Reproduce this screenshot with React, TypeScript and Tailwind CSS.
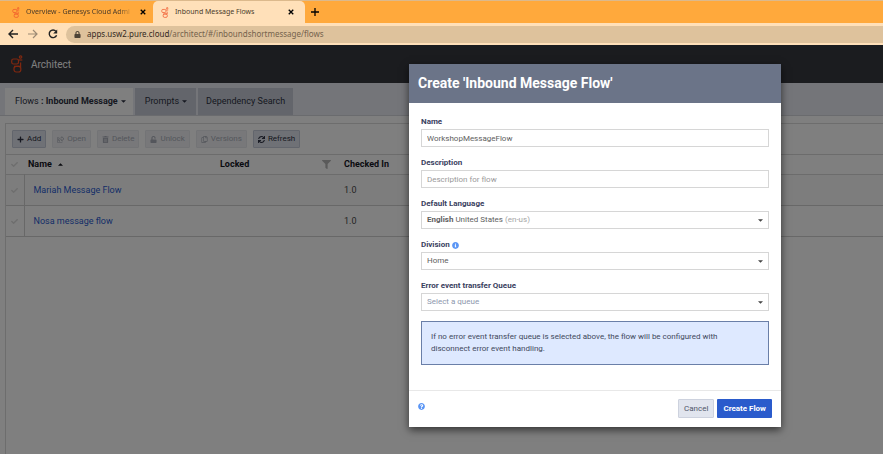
import React from "react";
import {
  FaCheck,
  FaFilter,
  FaInfoCircle,
  FaLock,
  FaPlus,
  FaQuestionCircle,
  FaRegCopy,
  FaRegShareSquare,
  FaSync,
  FaTrashAlt,
  FaUnlock,
} from "react-icons/fa";

function GenesysLogo({ className }: { className: string }) {
  return (
    <svg viewBox="0 0 12 18" fill="none" stroke="currentColor" strokeWidth="1.2" className={className} aria-hidden="true">
      <circle cx="9.6" cy="2" r="1.2" />
      <rect x="0.7" y="4" width="6.8" height="5" rx="1.8" />
      <path d="M7.5 5h3.8" />
      <path d="M3 11.4h6.6V7.6" />
      <rect x="3" y="11.4" width="6.8" height="5.6" rx="2.2" />
    </svg>
  );
}

function Caret({ up = false, className = "" }: { up?: boolean; className?: string }) {
  return (
    <svg viewBox="0 0 6 3" fill="currentColor" className={`h-[3px] w-[5px] shrink-0 ${className}`} aria-hidden="true">
      <path d={up ? "M0 3h6L3 0z" : "M0 0h6L3 3z"} />
    </svg>
  );
}

function Cross() {
  return (
    <svg viewBox="0 0 8 8" className="size-[6px]" stroke="currentColor" strokeWidth="1.8" aria-hidden="true">
      <path d="M1 1l6 6M7 1L1 7" />
    </svg>
  );
}

function BrowserChrome() {
  return (
    <div className="bg-[#ffa93c] font-['Noto_Sans',sans-serif] text-[#4a3b2a]">
      <div className="flex h-[23px] items-stretch border-t border-[#dcb98c]">
        <div className="flex w-[153px] items-center pr-[7px] pl-[12px]">
          <GenesysLogo className="h-[11px] w-[8px] shrink-0 text-[#f0562c]" />
          <span className="ml-[6px] flex-1 text-[7px] whitespace-nowrap [mask-image:linear-gradient(to_right,black_85%,transparent)]">
            Overview - Genesys Cloud Admi
          </span>
          <button aria-label="Close tab" className="ml-[6px] text-black">
            <Cross />
          </button>
        </div>
        <div className="flex w-[152px] items-center rounded-t-[5px] bg-[#ffe0b9] pr-[11px] pl-[8px]">
          <GenesysLogo className="h-[11px] w-[8px] shrink-0 text-[#f0562c]" />
          <span className="ml-[6px] flex-1 text-[7px] whitespace-nowrap">Inbound Message Flows</span>
          <button aria-label="Close tab" className="text-black">
            <Cross />
          </button>
        </div>
        <button aria-label="New tab" className="ml-[2px] px-1 text-black">
          <svg viewBox="0 0 8 8" className="size-[8px]" stroke="currentColor" strokeWidth="1.3" aria-hidden="true">
            <path d="M4 0v8M0 4h8" />
          </svg>
        </button>
      </div>
      <div className="flex h-[22px] items-center bg-[#ffe0b9] pl-[8px]">
        <button aria-label="Back" className="text-[#222]">
          <svg viewBox="0 0 10 10" fill="none" stroke="currentColor" strokeWidth="1.4" className="size-[10px]" aria-hidden="true">
            <path d="M10 5H1.2M5 1L1 5l4 4" />
          </svg>
        </button>
        <button aria-label="Forward" className="ml-[10px] text-[#9c8a74]">
          <svg viewBox="0 0 10 10" fill="none" stroke="currentColor" strokeWidth="1.2" className="size-[10px]" aria-hidden="true">
            <path d="M0 5h8.8M5 1l4 4-4 4" />
          </svg>
        </button>
        <button aria-label="Reload" className="ml-[10px] text-[#222]">
          <svg viewBox="0 0 10 10" fill="none" stroke="currentColor" strokeWidth="1.4" className="size-[10px]" aria-hidden="true">
            <path d="M8.6 6.2A3.8 3.8 0 1 1 8 2.4" />
            <path d="M9.2 0.4v4H5.2z" fill="currentColor" stroke="none" />
          </svg>
        </button>
        <div className="ml-[8px] flex h-[17px] flex-1 items-center rounded-l-full bg-[#dec29c] pl-[8px]">
          <FaLock className="size-[7px] text-[#4d4336]" />
          <span className="ml-[6px] text-[8px] text-[#75634c]">
            <span className="text-[#33291d]">apps.usw2.pure.cloud</span>/architect/#/inboundshortmessage/flows
          </span>
        </div>
      </div>
    </div>
  );
}

const tools = [
  { label: "Add", Icon: FaPlus, enabled: true },
  { label: "Open", Icon: FaRegShareSquare, enabled: false },
  { label: "Delete", Icon: FaTrashAlt, enabled: false },
  { label: "Unlock", Icon: FaUnlock, enabled: false },
  { label: "Versions", Icon: FaRegCopy, enabled: false },
  { label: "Refresh", Icon: FaSync, enabled: true },
];

const flows = [
  { name: "Mariah Message Flow", version: "1.0" },
  { name: "Nosa message flow", version: "1.0" },
];

function FlowsPage() {
  return (
    <div className="flex flex-1 flex-col bg-white text-[#2d3142]">
      <header className="flex h-[38px] items-center bg-[#36383f] pl-[11px]">
        <GenesysLogo className="h-[18px] w-[12px] text-[#ff4f1f]" />
        <h1 className="ml-[8px] text-[10px] text-white">Architect</h1>
      </header>
      <nav className="flex h-[33px] items-end gap-[2px] border-b border-[#d4d6dc] bg-[#e9ebf2] pl-[5px] text-[9px]">
        <button className="flex h-[27px] items-center bg-white pr-[7px] pl-[10px]">
          <span>
            Flows <b>: Inbound Message</b>
          </span>
          <Caret className="ml-[3px]" />
        </button>
        <button className="flex h-[27px] items-center bg-[#c6cbd6] pr-[9px] pl-[10px]">
          Prompts
          <Caret className="ml-[3px]" />
        </button>
        <button className="h-[27px] bg-[#c6cbd6] px-[8px]">Dependency Search</button>
      </nav>
      <main className="mt-[7px] ml-[5px] flex-1 border-t border-l border-[#dadada]">
        <div className="flex h-[30px] items-center gap-[6px] pl-[6px]">
          {tools.map(({ label, Icon, enabled }) => (
            <button
              key={label}
              disabled={!enabled}
              className="flex h-[18px] items-center gap-[3px] rounded-[1px] border border-[#c4cad8] bg-[#dfe3ec] px-[4px] text-[8px] disabled:border-[#e6e8ed] disabled:bg-[#f0f1f4] disabled:text-[#a9adb8]"
            >
              <Icon className="size-[7px]" />
              {label}
            </button>
          ))}
        </div>
        <table className="w-full table-fixed border-collapse text-left text-[9px]">
          <colgroup>
            <col className="w-[18px]" />
            <col className="w-[190px]" />
            <col className="w-[125px]" />
            <col />
          </colgroup>
          <thead>
            <tr className="h-[20px] border-y border-[#d8d8d8] text-[#14161f]">
              <th className="pl-[5px]">
                <FaCheck className="size-[7px] text-[#dcdcdc]" />
              </th>
              <th className="pl-[4px]">
                <span className="flex items-center">
                  Name <Caret up className="ml-[6px]" />
                </span>
              </th>
              <th className="pl-[6px]">
                <span className="flex items-center justify-between pr-[8px]">
                  Locked <FaFilter className="size-[9px] text-[#b4b4b4]" />
                </span>
              </th>
              <th className="pl-[5px]">Checked In</th>
            </tr>
          </thead>
          <tbody>
            {flows.map((flow) => (
              <tr key={flow.name} className="h-[31px] border-b border-[#d0d0d0] bg-[#fbfbfb] even:bg-white">
                <td className="border-r border-[#d0d0d0] pl-[5px]">
                  <FaCheck className="size-[7px] text-[#dcdcdc]" />
                </td>
                <td className="pt-[2px] pl-[9px]">
                  <a href="#flow" className="text-[#2a5bd0]">
                    {flow.name}
                  </a>
                </td>
                <td />
                <td className="pt-[2px] pl-[5px] text-[#4a4a4a]">{flow.version}</td>
              </tr>
            ))}
          </tbody>
        </table>
      </main>
    </div>
  );
}

const fieldClass = "flex flex-col gap-[2px]";
const labelClass = "flex items-center gap-[2px] text-[8px] leading-[10px] font-bold text-[#3a4160]";
const boxClass =
  "block h-[18px] w-full appearance-none rounded-none border border-[#d6d6d6] bg-white px-[5px] text-[8px] outline-none";

function SelectField({
  id,
  label,
  value,
  info = false,
  shown,
}: {
  id: string;
  label: string;
  value: string;
  info?: boolean;
  shown: React.ReactNode;
}) {
  return (
    <div className={fieldClass}>
      <label htmlFor={id} className={labelClass}>
        {label}
        {info && <FaInfoCircle className="size-[7px] text-[#5b96f5]" />}
      </label>
      <div className="relative">
        <select id={id} className={`${boxClass} text-transparent`}>
          <option>{value}</option>
        </select>
        <span aria-hidden="true" className="pointer-events-none absolute inset-0 flex items-center justify-between px-[6px] text-[8px] text-[#5e5e5e]">
          <span>{shown}</span>
          <Caret className="text-[#444]" />
        </span>
      </div>
    </div>
  );
}

function CreateFlowDialog() {
  return (
    <form
      role="dialog"
      aria-labelledby="dialog-title"
      className="absolute top-[19px] left-[409px] w-[372px] bg-white shadow-[0_3px_8px_rgba(0,0,0,0.6)]"
    >
      <h2 id="dialog-title" className="flex h-[39px] items-center bg-[#6b7488] px-[9px] text-[14px] font-bold text-white">
        Create 'Inbound Message Flow'
      </h2>
      <div className="px-[12px] pt-[14px] pb-[25px]">
        <div className="flex flex-col gap-[11px]">
          <div className={fieldClass}>
            <label htmlFor="name" className={labelClass}>
              Name
            </label>
            <input id="name" defaultValue="WorkshopMessageFlow" className={`${boxClass} text-[#5e5e5e]`} />
          </div>
          <div className={fieldClass}>
            <label htmlFor="description" className={labelClass}>
              Description
            </label>
            <input
              id="description"
              placeholder="Description for flow"
              className={`${boxClass} text-[#5e5e5e] placeholder:text-[#999]`}
            />
          </div>
          <SelectField
            id="language"
            label="Default Language"
            value="English United States (en-us)"
            shown={
              <>
                <b>English</b> United States <span className="text-[#a5a5a5]">(en-us)</span>
              </>
            }
          />
          <SelectField id="division" label="Division" info value="Home" shown="Home" />
          <SelectField
            id="queue"
            label="Error event transfer Queue"
            value="Select a queue"
            shown={<span className="text-[#8d97ad]">Select a queue</span>}
          />
        </div>
        <p className="mt-[10px] border border-[#6a7fa8] bg-[#dee9ff] py-[9px] pr-[36px] pl-[9px] text-[8px] leading-[12px] text-[#41485c]">
          If no error event transfer queue is selected above, the flow will be configured with disconnect error event handling.
        </p>
      </div>
      <footer className="flex h-[37px] items-start gap-[3px] border-t border-[#e8e8e8] px-[9px] pt-[8px]">
        <button type="button" aria-label="Help" className="mr-auto flex h-[14px] items-center text-[#5b96f5]">
          <FaQuestionCircle className="size-[7px]" />
        </button>
        <button type="button" className="h-[19px] rounded-[1px] border border-[#cdd2de] bg-[#e1e5ee] px-[5px] text-[8px] text-[#50566a]">
          Cancel
        </button>
        <button type="submit" className="h-[19px] rounded-[1px] bg-[#2a5bcc] px-[6px] text-[8px] font-bold text-white">
          Create Flow
        </button>
      </footer>
    </form>
  );
}

export default function App() {
  return (
    <div className="flex min-h-screen flex-col overflow-hidden font-['Roboto',sans-serif]">
      <BrowserChrome />
      <div className="relative flex flex-1 flex-col">
        <FlowsPage />
        <div className="absolute inset-0 bg-black/50" />
        <CreateFlowDialog />
      </div>
    </div>
  );
}
